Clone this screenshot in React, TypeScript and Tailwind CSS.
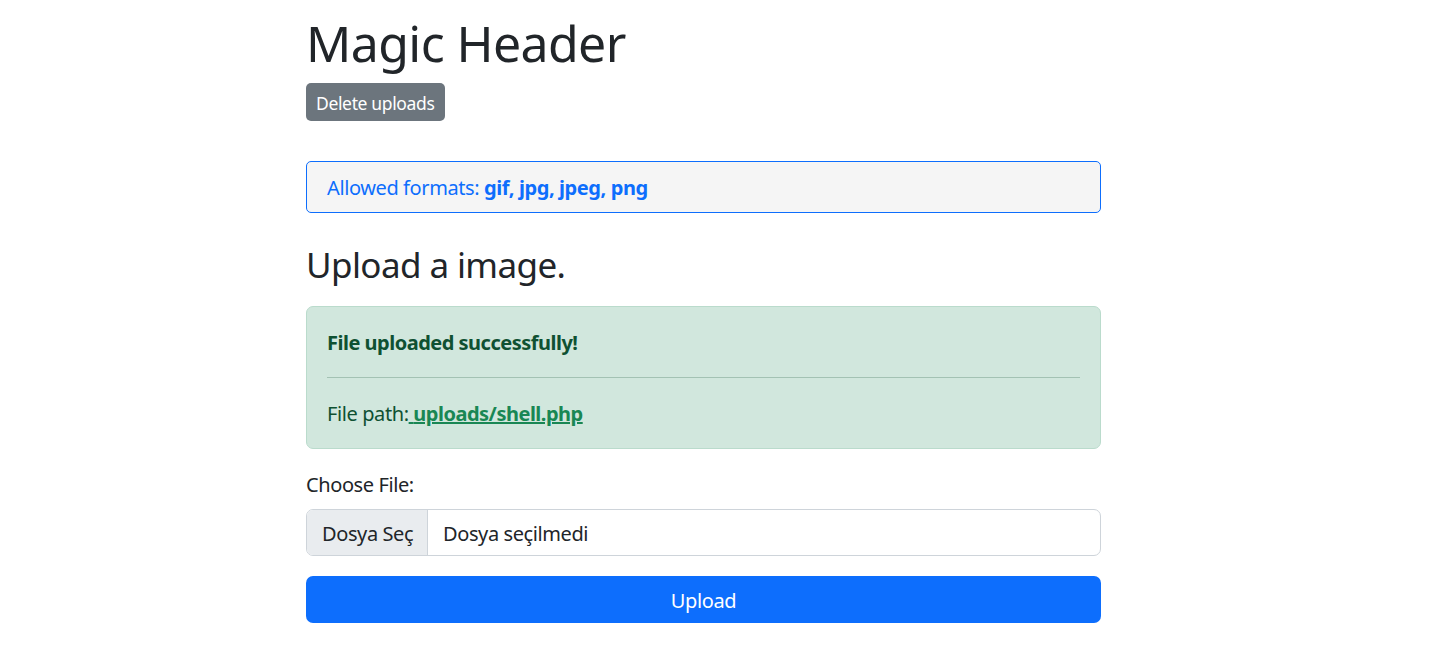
export default function App() {
  return (
    <div className="min-h-screen bg-white font-['Segoe_UI','Noto_Sans',sans-serif] text-[20px] leading-[30px] tracking-[-0.4px] text-[#212529]">
      <div className="ml-[306px] w-[795px] pt-[14px]">
        {/* Header */}
        <h1 className="text-[50px] leading-[59px] font-normal tracking-[-0.6px]">Magic Header</h1>
        <button className="mt-[10px] h-[38px] rounded-[5px] bg-[#6c757d] px-[10px] pt-[1px] text-[17.5px] leading-[26px] tracking-[-0.35px] text-white">
          Delete uploads
        </button>

        {/* Allowed formats */}
        <div className="mt-[40px] rounded-[5px] border border-[#0d6efd] bg-[#f5f5f5] px-[20px] pt-[11px] pb-[9px] text-[#0d6efd]">
          Allowed formats: <b className="font-bold">gif, jpg, jpeg, png</b>
        </div>

        <h2 className="mt-[30px] mb-[19px] text-[35px] leading-[44px] font-normal tracking-[-0.6px]">Upload a image.</h2>

        {/* Result */}
        <div className="rounded-[7px] border border-[#badbcc] bg-[#d1e7dd] px-[20px] pt-[21px] pb-[19px] text-[#0f5132]">
          <p className="font-bold tracking-[-0.5px]">File uploaded successfully!</p>
          <hr className="mt-[19px] mb-[21px] border-t border-[#a3c2b3]" />
          <p>
            File path:
            <a href="#" className="font-bold tracking-[-0.5px] text-[#198754] underline">
              {' '}uploads/shell.php
            </a>
          </p>
        </div>

        {/* Form */}
        <form className="mt-[20px]" onSubmit={(e) => e.preventDefault()}>
          <label className="block pt-[1px] mb-[9px]">Choose File:</label>
          <div className="flex h-[47px] overflow-hidden rounded-[7px] border border-[#ced4da] bg-white">
            <span className="flex w-[121px] shrink-0 items-center whitespace-nowrap border-r border-[#ced4da] bg-[#e9ecef] pl-[15px] pt-[2px]">
              Dosya Seç
            </span>
            <span className="flex items-center whitespace-nowrap px-[15px] pt-[2px]">Dosya seçilmedi</span>
          </div>
          <button
            type="submit"
            className="mt-[20px] h-[47px] w-full rounded-[7px] bg-[#0d6efd] pt-[2px] text-white"
          >
            Upload
          </button>
        </form>
      </div>
    </div>
  );
}
